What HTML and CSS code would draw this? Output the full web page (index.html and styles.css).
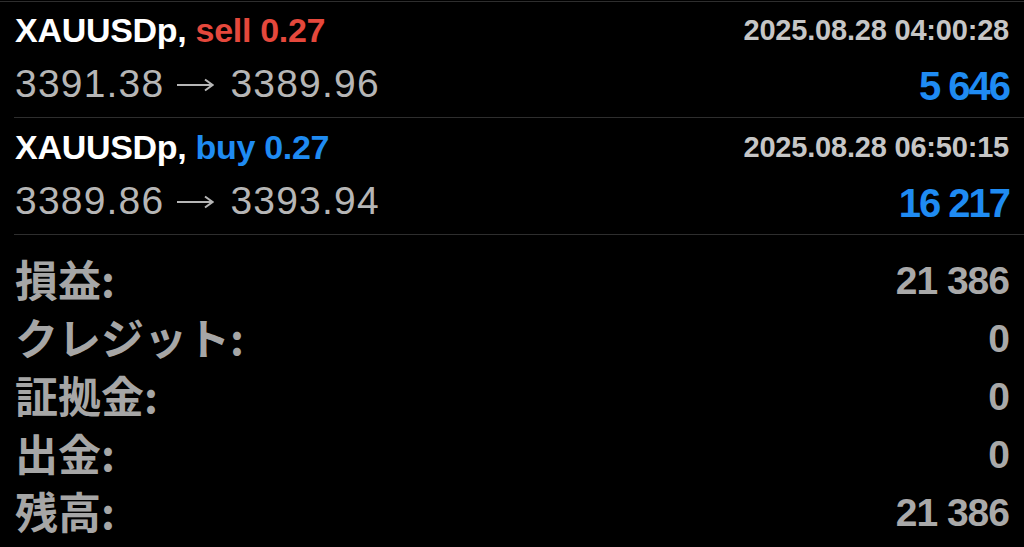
FILE: index.html
```html
<!DOCTYPE html>
<html lang="ja">
<head>
<meta charset="utf-8">
<link rel="stylesheet" href="styles.css">
</head>
<body>
<div class="page">
  <div class="trade">
    <div class="line head">
      <div class="title">XAUUSDp, <span class="sell">sell 0.27</span></div>
      <div class="date">2025.08.28 04:00:28</div>
    </div>
    <div class="line body">
      <div class="price"><span>3391.38</span><svg class="arrow" width="37" height="14" viewBox="0 0 37 14"><path d="M0 7H35M28 1.5L35.5 7L28 12.5" fill="none" stroke="currentColor" stroke-width="2"/></svg><span>3389.96</span></div>
      <div class="profit">5 646</div>
    </div>
  </div>
  <div class="trade second">
    <div class="line head">
      <div class="title">XAUUSDp, <span class="buy">buy 0.27</span></div>
      <div class="date">2025.08.28 06:50:15</div>
    </div>
    <div class="line body">
      <div class="price"><span>3389.86</span><svg class="arrow" width="37" height="14" viewBox="0 0 37 14"><path d="M0 7H35M28 1.5L35.5 7L28 12.5" fill="none" stroke="currentColor" stroke-width="2"/></svg><span>3393.94</span></div>
      <div class="profit">16 217</div>
    </div>
  </div>
  <div class="summary">
    <div class="srow"><span class="label">損益:</span><span class="value">21 386</span></div>
    <div class="srow"><span class="label">クレジット:</span><span class="value">0</span></div>
    <div class="srow"><span class="label">証拠金:</span><span class="value">0</span></div>
    <div class="srow"><span class="label">出金:</span><span class="value">0</span></div>
    <div class="srow"><span class="label">残高:</span><span class="value">21 386</span></div>
  </div>
</div>
</body>
</html>
```
FILE: styles.css
```css
html, body {
  margin: 0;
  padding: 0;
  background: #000;
}
body {
  font-family: "Liberation Sans", Arial, "Noto Sans CJK JP", sans-serif;
  color: #fff;
  width: 1024px;
  height: 547px;
  overflow: hidden;
}
.page {
  padding-top: 1px;
}
.page::before {
  content: "";
  display: block;
  height: 1px;
  background: #2e2e2e;
}
.trade {
  margin-left: 14px;
  padding: 0 15px 7px 1px;
  height: 108px;
  border-bottom: 1px solid #2e2e2e;
}
.trade.second {
  padding-top: 1px;
}
.line {
  display: flex;
  justify-content: space-between;
  align-items: center;
}
.head {
  height: 56px;
}
.body {
  height: 52px;
}
.title {
  font-weight: bold;
  font-size: 34px;
  letter-spacing: -0.3px;
  color: #fff;
}
.sell {
  color: #e5483c;
}
.buy {
  color: #1f8bf2;
}
.date {
  font-weight: bold;
  font-size: 29px;
  color: #c6c6c6;
  letter-spacing: -0.2px;
}
.price {
  display: flex;
  align-items: center;
  font-size: 39px;
  color: #b6b6b6;
  letter-spacing: 1.2px;
}
.arrow {
  display: block;
  margin: 2px 16px 0 13px;
  flex: none;
}
.profit {
  font-weight: bold;
  font-size: 40px;
  color: #1f8bf2;
  letter-spacing: -2px;
  padding-top: 4px;
}
.summary {
  padding: 14px 15px 0 15px;
}
.srow {
  height: 58px;
  display: flex;
  justify-content: space-between;
  align-items: center;
}
.label {
  font-family: "Noto Sans CJK JP", "Liberation Sans", sans-serif;
  font-weight: bold;
  font-size: 43px;
  color: #a6a6a6;
  letter-spacing: 0;
}
.value {
  font-weight: bold;
  font-size: 39px;
  color: #a9a9a9;
  letter-spacing: -1px;
  padding-top: 5px;
}
```
